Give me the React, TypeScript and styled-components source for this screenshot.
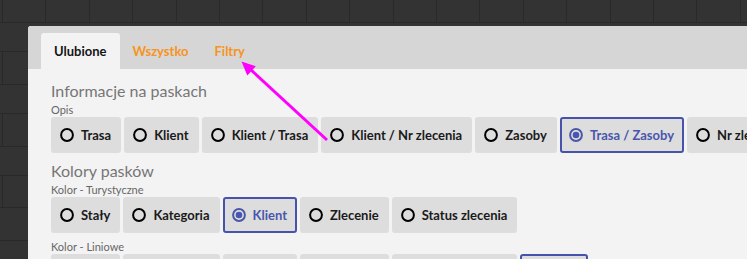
import React from 'react';
import styled, { createGlobalStyle } from 'styled-components';

const GlobalStyle = createGlobalStyle`
  html, body {
    margin: 0;
    padding: 0;
  }
  body {
    font-family: Lato, "Open Sans", "Liberation Sans", sans-serif;
    -webkit-font-smoothing: antialiased;
  }
`;

// Gantt-like grid showing behind the settings panel
const gridLine = '#292929';
const rowLines = [22, 51, 84, 113, 146, 175, 207, 240];
const sideCells: Array<[number, number]> = [
  [51, 33],
  [113, 33],
  [175, 32],
];

const backdrop = [
  `repeating-linear-gradient(90deg, ${gridLine} 0 1px, transparent 1px 43.4px) 2px 0 / 100% 22px no-repeat`,
  ...rowLines.map(y => `linear-gradient(${gridLine}, ${gridLine}) 0 ${y}px / 100% 1px no-repeat`),
  ...sideCells.map(([y, h]) => `linear-gradient(${gridLine}, ${gridLine}) 2px ${y}px / 1px ${h}px no-repeat`),
  '#333333',
].join(', ');

const Page = styled.div`
  position: relative;
  width: 747px;
  height: 259px;
  box-sizing: border-box;
  padding: 26px 0 0 28px;
  overflow: hidden;
  background: ${backdrop};
`;

const Panel = styled.div`
  height: 100%;
  background: #f3f3f3;
  border-top-left-radius: 3px;
  overflow: hidden;
`;

const TabBar = styled.div`
  height: 43px;
  box-sizing: border-box;
  display: flex;
  align-items: flex-end;
  padding-left: 13px;
  background: #d6d6d6;
`;

const Tab = styled.div<{ $active?: boolean }>`
  height: 36px;
  display: flex;
  align-items: center;
  padding: 0 13px;
  border-radius: 3px 3px 0 0;
  font-size: 13px;
  font-weight: 700;
  color: ${p => (p.$active ? '#151515' : '#f7941d')};
  background: ${p => (p.$active ? '#f3f3f3' : 'transparent')};
  cursor: pointer;
`;

const Content = styled.div`
  padding: 12px 0 0 23px;
`;

const Section = styled.section`
  & + & {
    margin-top: 8px;
  }
`;

const SectionTitle = styled.h2`
  margin: 0 0 2px;
  font-size: 16px;
  line-height: 20px;
  font-weight: 400;
  color: #767676;
`;

const Field = styled.div`
  & + & {
    margin-top: 7px;
  }
`;

const FieldLabel = styled.div`
  font-size: 11px;
  line-height: 14px;
  color: #666666;
`;

const OptionRow = styled.div`
  display: flex;
  flex-wrap: nowrap;
  gap: 3px;
`;

const Option = styled.button<{ $selected?: boolean }>`
  flex: none;
  display: inline-flex;
  align-items: center;
  gap: 7px;
  height: 36px;
  box-sizing: border-box;
  padding: 0 8px 0 7px;
  border: 2px solid ${p => (p.$selected ? '#4753ab' : 'transparent')};
  border-radius: 3px;
  background: #dddddd;
  font-family: inherit;
  font-size: 13px;
  font-weight: 700;
  white-space: nowrap;
  color: ${p => (p.$selected ? '#4a56ad' : '#1a1a1a')};
  cursor: pointer;
`;

const RadioMark = styled.svg`
  flex: none;
  display: block;
`;

const Pointer = styled.svg`
  position: absolute;
  left: 0;
  top: 0;
  pointer-events: none;
`;

const Radio = ({ checked }: { checked?: boolean }) => (
  <RadioMark width="14" height="14" viewBox="0 0 14 14">
    <circle
      cx="7"
      cy="7"
      r="5.9"
      fill="none"
      stroke={checked ? 'currentColor' : '#000'}
      strokeWidth="2"
    />
    {checked && <circle cx="7" cy="7" r="3.3" fill="currentColor" />}
  </RadioMark>
);

interface FieldDef {
  label: string;
  options: string[];
  selected: string;
}

interface SectionDef {
  title: string;
  fields: FieldDef[];
}

const colorOptions = ['Stały', 'Kategoria', 'Klient', 'Zlecenie', 'Status zlecenia'];

const sections: SectionDef[] = [
  {
    title: 'Informacje na paskach',
    fields: [
      {
        label: 'Opis',
        options: ['Trasa', 'Klient', 'Klient / Trasa', 'Klient / Nr zlecenia', 'Zasoby', 'Trasa / Zasoby', 'Nr zlecenia'],
        selected: 'Trasa / Zasoby',
      },
    ],
  },
  {
    title: 'Kolory pasków',
    fields: [
      { label: 'Kolor - Turystyczne', options: colorOptions, selected: 'Klient' },
      { label: 'Kolor - Liniowe', options: [...colorOptions, 'Linia'], selected: 'Linia' },
    ],
  },
];

const tabs = ['Ulubione', 'Wszystko', 'Filtry'];

export default function App() {
  return (
    <>
      <GlobalStyle />
      <Page>
        <Panel>
          <TabBar>
            {tabs.map((t, i) => (
              <Tab key={t} $active={i === 0}>
                {t}
              </Tab>
            ))}
          </TabBar>
          <Content>
            {sections.map(section => (
              <Section key={section.title}>
                <SectionTitle>{section.title}</SectionTitle>
                {section.fields.map(field => (
                  <Field key={field.label}>
                    <FieldLabel>{field.label}</FieldLabel>
                    <OptionRow>
                      {field.options.map(opt => (
                        <Option key={opt} $selected={opt === field.selected}>
                          <Radio checked={opt === field.selected} />
                          {opt}
                        </Option>
                      ))}
                    </OptionRow>
                  </Field>
                ))}
              </Section>
            ))}
          </Content>
        </Panel>

        {/* annotation arrow pointing at the Filtry tab */}
        <Pointer width="747" height="259" viewBox="0 0 747 259">
          <line x1="327" y1="140" x2="250" y2="69" stroke="#ff00ff" strokeWidth="3" />
          <polygon points="241.5,61.5 255.8,66.3 247.3,75.4" fill="#ff00ff" />
        </Pointer>
      </Page>
    </>
  );
}
